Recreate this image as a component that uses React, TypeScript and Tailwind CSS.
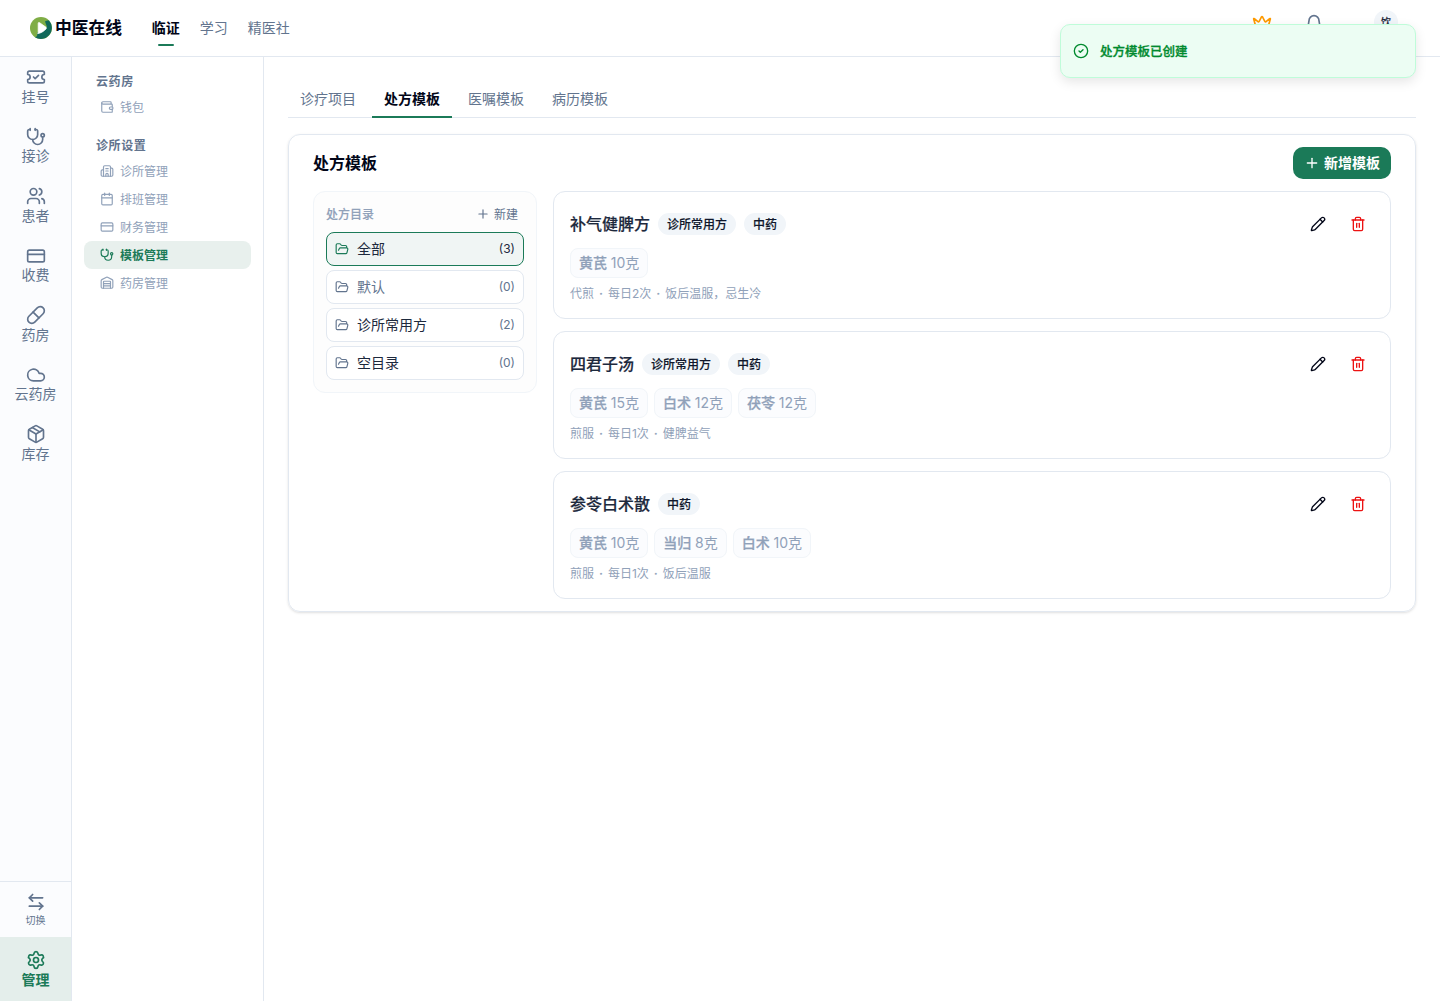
import {
  ArrowLeftRight,
  Bell,
  Building2,
  Calendar,
  CircleCheck,
  Cloud,
  CreditCard,
  Crown,
  FolderOpen,
  Package,
  Pencil,
  Pill,
  Plus,
  Settings,
  Stethoscope,
  TicketCheck,
  Trash2,
  Users,
  Wallet,
  Warehouse,
} from 'lucide-react';
import type { LucideIcon } from 'lucide-react';
import clsx from 'clsx';

interface NavItem {
  label: string;
  icon: LucideIcon;
  active?: boolean;
}

interface Template {
  name: string;
  tags: string[];
  herbs: [string, string][];
  note: string[];
}

const topNav = ['临证', '学习', '精医社'];

const railItems: NavItem[] = [
  { label: '挂号', icon: TicketCheck },
  { label: '接诊', icon: Stethoscope },
  { label: '患者', icon: Users },
  { label: '收费', icon: CreditCard },
  { label: '药房', icon: Pill },
  { label: '云药房', icon: Cloud },
  { label: '库存', icon: Package },
];

const menuGroups: { title: string; items: NavItem[] }[] = [
  { title: '云药房', items: [{ label: '钱包', icon: Wallet }] },
  {
    title: '诊所设置',
    items: [
      { label: '诊所管理', icon: Building2 },
      { label: '排班管理', icon: Calendar },
      { label: '财务管理', icon: CreditCard },
      { label: '模板管理', icon: Stethoscope, active: true },
      { label: '药房管理', icon: Warehouse },
    ],
  },
];

const tabs = ['诊疗项目', '处方模板', '医嘱模板', '病历模板'];

const folders = [
  { name: '全部', count: 3, active: true },
  { name: '默认', count: 0, muted: true },
  { name: '诊所常用方', count: 2 },
  { name: '空目录', count: 0 },
];

const templates: Template[] = [
  {
    name: '补气健脾方',
    tags: ['诊所常用方', '中药'],
    herbs: [['黄芪', '10克']],
    note: ['代煎', '每日2次', '饭后温服，忌生冷'],
  },
  {
    name: '四君子汤',
    tags: ['诊所常用方', '中药'],
    herbs: [['黄芪', '15克'], ['白术', '12克'], ['茯苓', '12克']],
    note: ['煎服', '每日1次', '健脾益气'],
  },
  {
    name: '参苓白术散',
    tags: ['中药'],
    herbs: [['黄芪', '10克'], ['当归', '8克'], ['白术', '10克']],
    note: ['煎服', '每日1次', '饭后温服'],
  },
];

function Logo() {
  return (
    <div className="flex items-center gap-[3px]">
      <svg width="22" height="22" viewBox="0 0 22 22">
        <circle cx="11" cy="11" r="11" fill="#7fad45" />
        <path d="M15 4.500C16.500 3.500 18 3.300 19 3.500A11 11 0 0 1 5 20.200C8 19.500 7 17 7.500 15.500L17 10Z" fill="#11695a" />
        <path
          d="M8.200 6.400v7.800c0 1.200 0 1.700-.5 2.400 3.500-.6 6.300-2.500 8.300-4.700.6-.7.500-1.300-.2-1.800L9.600 5.700c-.8-.5-1.400-.2-1.400.7Z"
          fill="#fff"
          stroke="#fff"
          strokeWidth="0.8"
          strokeLinejoin="round"
        />
      </svg>
      <span className="text-[16.8px] leading-6 font-bold text-slate-950">中医在线</span>
    </div>
  );
}

function Header() {
  return (
    <header className="flex h-[57px] shrink-0 items-center border-b border-slate-200 pr-[42px] pl-[30px]">
      <Logo />
      <nav className="ml-[29.5px] flex gap-5 text-sm">
        {topNav.map((label, i) => (
          <div key={label} className={clsx('relative', i === 0 ? 'font-bold text-slate-950' : 'text-slate-500')}>
            {label}
            {i === 0 && <span className="absolute -bottom-2 left-1.5 h-0.5 w-4 rounded-full bg-[#1b7a58]" />}
          </div>
        ))}
      </nav>
      <div className="-mt-3 ml-auto flex items-center">
        <Crown size={20} className="mt-1 text-amber-500" />
        <Bell size={20} className="mt-1 ml-8 text-slate-500" />
        <div className="ml-[50px] flex size-6 items-center justify-center rounded-full bg-slate-100 text-[10px] font-medium text-slate-800 [-webkit-text-stroke:0.15px]">
          饮
        </div>
      </div>
    </header>
  );
}

function Rail() {
  return (
    <aside className="flex w-[72px] shrink-0 flex-col border-r border-slate-200 bg-[#fbfcfe] text-slate-500">
      {railItems.map(({ label, icon: Icon }) => (
        <div key={label} className="flex flex-col items-center gap-[0.5px] pt-2.5 pb-[11.5px] text-sm leading-[17.5px]">
          <Icon size={20} />
          {label}
        </div>
      ))}
      <div className="mt-auto flex h-14 flex-col items-center gap-px border-t border-slate-200 pt-2.5 text-[10px] leading-[15px]">
        <ArrowLeftRight size={20} />
        切换
      </div>
      <div className="flex h-16 flex-col items-center gap-px bg-[#e4eeeb] pt-[13px] text-sm leading-[17.5px] font-bold text-[#1b7a58]">
        <Settings size={20} />
        管理
      </div>
    </aside>
  );
}

function SideMenu() {
  return (
    <aside className="w-48 shrink-0 border-r border-slate-200 px-3 pt-3">
      {menuGroups.map((group) => (
        <section key={group.title} className="mb-3">
          <h3 className="px-3 pt-[5px] pb-[3px] text-xs leading-4 font-bold tracking-wider text-slate-500">{group.title}</h3>
          {group.items.map(({ label, icon: Icon, active }) => (
            <div
              key={label}
              className={clsx(
                'flex h-7 items-center gap-1.5 rounded-lg pl-4 text-xs',
                active ? 'bg-[#e8f0ed] font-bold text-[#1b7a58]' : 'text-slate-400',
              )}
            >
              <Icon size={14} />
              <span className="pt-px">{label}</span>
            </div>
          ))}
        </section>
      ))}
    </aside>
  );
}

function FolderPanel() {
  return (
    <div className="w-56 shrink-0 self-start rounded-xl border border-slate-100 bg-[#fdfdfd] p-3">
      <div className="mb-2 flex h-5 items-center justify-between text-xs">
        <span className="pt-px font-medium text-slate-400 [-webkit-text-stroke:0.15px]">处方目录</span>
        <button className="flex items-center gap-1 pr-1.5 text-slate-500">
          <Plus size={14} />
          <span className="pt-px">新建</span>
        </button>
      </div>
      <div className="space-y-1">
        {folders.map((folder) => (
          <div
            key={folder.name}
            className={clsx(
              'flex h-[34px] items-center gap-2 rounded-lg border px-2 text-sm',
              folder.active ? 'border-[#1b7a58] bg-[#f0f5f4]' : 'border-slate-200 bg-white',
            )}
          >
            <FolderOpen size={14} className={folder.active ? 'text-[#1b7a58]' : 'text-slate-500'} />
            <span className={folder.muted ? 'text-slate-500' : 'text-slate-800'}>{folder.name}</span>
            <span className={clsx('ml-auto text-xs', folder.active ? 'text-slate-800' : 'text-slate-500')}>
              ({folder.count})
            </span>
          </div>
        ))}
      </div>
    </div>
  );
}

function TemplateCard({ template }: { template: Template }) {
  return (
    <div className="h-32 space-y-2 rounded-xl border border-slate-200 p-4">
      <div className="flex h-8 items-center gap-2">
        <span className="text-base font-medium text-slate-800 [-webkit-text-stroke:0.2px]">{template.name}</span>
        {template.tags.map((tag) => (
          <span
            key={tag}
            className="rounded-full border border-transparent bg-slate-100 px-2 pt-[3px] pb-px text-xs font-medium text-slate-900 [-webkit-text-stroke:0.15px]"
          >
            {tag}
          </span>
        ))}
        <button className="ml-auto flex size-8 items-center justify-center text-slate-950">
          <Pencil size={16} />
        </button>
        <button className="flex size-8 items-center justify-center text-[#ec1313]">
          <Trash2 size={16} />
        </button>
      </div>
      <div className="flex gap-1.5 text-sm text-slate-400">
        {template.herbs.map(([herb, dose]) => (
          <span key={herb} className="rounded-lg border border-slate-100 bg-[#fbfcfe] px-2 py-1 [word-spacing:-0.2px]">
            <span className="font-medium [-webkit-text-stroke:0.25px]">{herb}</span> {dose}
          </span>
        ))}
      </div>
      <p className="text-xs text-slate-400">
        {template.note.map((part, i) => (
          <span key={part}>
            {i > 0 && <span className="mx-[1.85px] [-webkit-text-stroke:0.3px]"> · </span>}
            {part}
          </span>
        ))}
      </p>
    </div>
  );
}

function Toast() {
  return (
    <div className="absolute top-6 right-6 flex h-[54px] w-[356px] items-center gap-[11px] rounded-[10px] border border-[#bffcd9] bg-[#ecfdf3] px-3 text-[#008a2e] shadow-[0_4px_12px_rgba(0,0,0,0.1)]">
      <CircleCheck size={16} />
      <span className="pt-px text-[12.5px] leading-[18px] font-medium [-webkit-text-stroke:0.3px]">处方模板已创建</span>
    </div>
  );
}

export default function App() {
  return (
    <div className="relative flex h-[1001px] flex-col overflow-hidden bg-white font-[Inter,'Noto_Sans_CJK_SC',sans-serif]">
      <Header />
      <div className="flex min-h-0 flex-1">
        <Rail />
        <SideMenu />
        <main className="flex-1 p-6">
          <div className="flex h-[37px] gap-1 border-b border-slate-200">
            {tabs.map((tab, i) => (
              <button
                key={tab}
                className={clsx(
                  'h-[37px] border-b-2 px-3 text-sm',
                  i === 1 ? 'border-[#1b7a58] font-bold text-slate-950' : 'border-transparent text-slate-500',
                )}
              >
                {tab}
              </button>
            ))}
          </div>
          <section className="mt-4 rounded-xl border border-slate-200 px-6 py-3 shadow-sm">
            <div className="flex items-center justify-between">
              <h2 className="text-base font-bold text-slate-950">处方模板</h2>
              <button className="flex h-8 items-center gap-1 rounded-[10px] bg-[#1b7a58] px-[11px] text-sm font-bold text-white">
                <Plus size={16} />
                新增模板
              </button>
            </div>
            <div className="mt-3 flex gap-4">
              <FolderPanel />
              <div className="flex-1 space-y-3">
                {templates.map((template) => (
                  <TemplateCard key={template.name} template={template} />
                ))}
              </div>
            </div>
          </section>
        </main>
      </div>
      <Toast />
    </div>
  );
}
